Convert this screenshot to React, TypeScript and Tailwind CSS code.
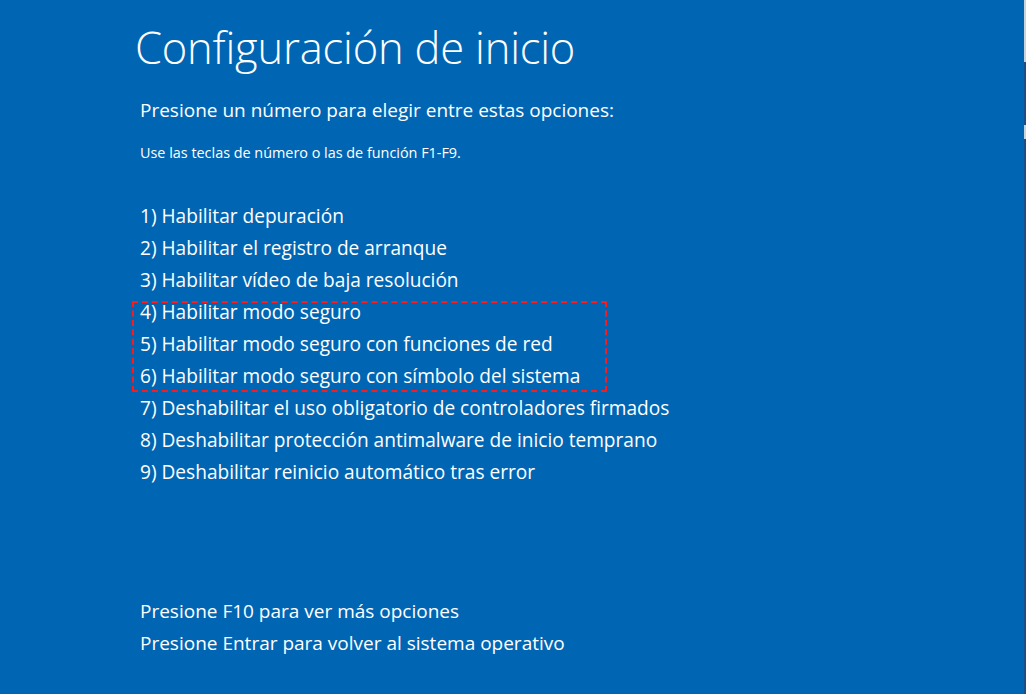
const options = [
  '1) Habilitar depuración',
  '2) Habilitar el registro de arranque',
  '3) Habilitar vídeo de baja resolución',
  '4) Habilitar modo seguro',
  '5) Habilitar modo seguro con funciones de red',
  '6) Habilitar modo seguro con símbolo del sistema',
  '7) Deshabilitar el uso obligatorio de controladores firmados',
  '8) Deshabilitar protección antimalware de inicio temprano',
  '9) Deshabilitar reinicio automático tras error',
]

export default function App() {
  return (
    <div
      className="flex h-[694px] w-[1026px] overflow-hidden bg-[#0066b4] text-white"
      style={{ fontFamily: '"Open Sans", "Noto Sans", sans-serif' }}
    >
      <div className="flex flex-1 flex-col pl-[140px]">
        <h1 className="-ml-[5px] mt-[22px] text-[43.5px] font-light leading-[52px] tracking-[-0.2px]">
          Configuración de inicio
        </h1>
        <p className="mt-[22px] text-[19px] leading-[28px]">Presione un número para elegir entre estas opciones:</p>
        <p className="mt-[19px] text-[14.4px] leading-[20px]">Use las teclas de número o las de función F1-F9.</p>

        <div className="relative mt-[37px]">
          {options.map((o) => (
            <div key={o} className="text-[19.1px] leading-[32px]">
              {o}
            </div>
          ))}
          <div className="absolute left-[-8px] top-[101px] h-[91px] w-[475px] border-2 border-dashed border-[#ff1a1a]" />
        </div>

        <div className="mt-[107px]">
          <p className="text-[19px] leading-[32px]">Presione F10 para ver más opciones</p>
          <p className="text-[19px] leading-[32px]">Presione Entrar para volver al sistema operativo</p>
        </div>
      </div>
      <div className="flex w-[2px] flex-col">
        <div className="h-[62px] bg-[#c9d3dc]" />
        <div className="h-[63px] bg-[#1d4e86]" />
        <div className="h-[14px] bg-[#c9d3dc]" />
        <div className="flex-1 bg-[#1d4e86]" />
      </div>
    </div>
  )
}
